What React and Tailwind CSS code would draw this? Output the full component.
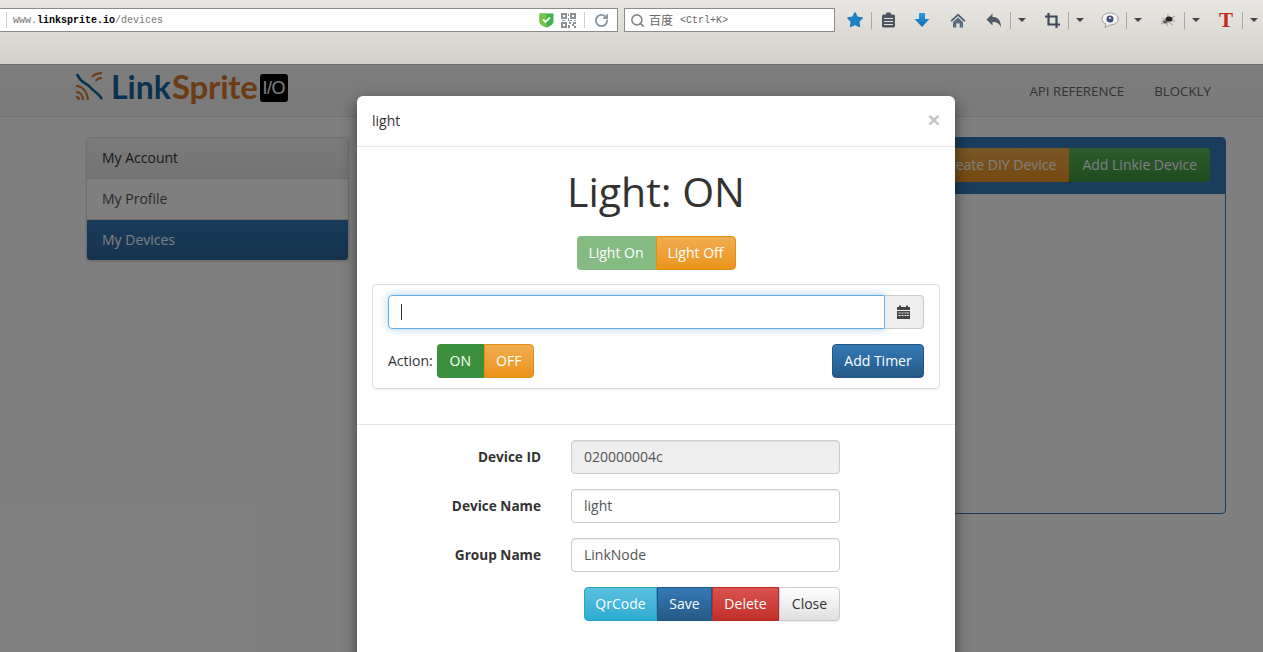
import React from 'react';
import { Search, RotateCw, Star } from 'lucide-react';

const sans = { fontFamily: '"Open Sans", sans-serif' };

const Caret = () => (
    <div className="w-0 h-0 border-x-[4px] border-x-transparent border-t-[4px] border-t-[#444]"></div>
);

const Sep = () => <div className="w-px h-[17px] bg-[#a9a7a2]"></div>;

const DropSlot = ({ children }) => (
    <div className="flex items-center w-[58px]">
        <div className="w-[32px] flex justify-center">{children}</div>
        <Sep />
        <div className="w-[22px] flex justify-center"><Caret /></div>
    </div>
);

const Slot = ({ children, w = 'w-[36px]' }) => (
    <div className={`${w} flex justify-center`}>{children}</div>
);

const QrIcon = () => (
    <svg width="15" height="15" viewBox="0 0 15 15" fill="#8a9094">
        <path d="M0 0h6v6H0zM2 2v2h2V2zM9 0h6v6H9zM11 2v2h2V2zM0 9h6v6H0zM2 11v2h2v-2z" fillRule="evenodd" />
        <path d="M7 1h1v2H7zM7 5h1v3H7zM1 7h3v1H1zM9 7h2v1H9zM13 7h2v1h-2zM8 9h2v2H8zM12 9h3v2h-3zM7 12h2v3H7zM11 11h2v2h-2zM13 13h2v2h-2z" />
    </svg>
);

const ShieldIcon = () => (
    <svg width="15" height="16" viewBox="0 0 15 16">
        <path d="M0.5 1.500h14v8c0 3-4 5-7 6-3-1-7-3-7-6z" fill="#3cb54a" />
        <path d="M0.500 1.500h7v14c-3-1-7-3-7-6z" fill="#74c644" />
        <path d="M4 7.500l2.500 2.500L11 5.500" stroke="#fff" strokeWidth="1.800" fill="none" />
    </svg>
);

const ClipboardIcon = () => (
    <svg width="15" height="16" viewBox="0 0 15 16">
        <rect x="1" y="2.500" width="13" height="13" rx="1.500" fill="#4a5560" />
        <rect x="5" y="0.500" width="5" height="3" rx="1" fill="#4a5560" />
        <path d="M3 6.500h9M3 9.500h9M3 12.500h9" stroke="#e4e2dd" strokeWidth="1.200" />
    </svg>
);

const DownloadIcon = () => (
    <svg width="16" height="16" viewBox="0 0 16 16">
        <defs>
            <linearGradient id="dl" x1="0" y1="0" x2="0" y2="1">
                <stop offset="0" stopColor="#2c9be0" />
                <stop offset="1" stopColor="#0f6db5" />
            </linearGradient>
        </defs>
        <path d="M5 1h6v6h4.500L8 15 0.500 7H5z" fill="url(#dl)" />
    </svg>
);

const HomeIcon = () => (
    <svg width="16" height="15" viewBox="0 0 16 15">
        <path d="M8 0.500L0.500 7.500l1.200 1.200L8 3l6.300 5.700 1.200-1.200z" fill="#4a5f70" />
        <path d="M3 9l5-4.500L13 9v5.500H9.700V10.500H6.300v4H3z" fill="#5a7082" />
    </svg>
);

const UndoIcon = () => (
    <svg width="16" height="15" viewBox="0 0 16 15">
        <path d="M6.500 0.500v3.500c5 0 8.500 2.500 8.500 10.500-1.500-4-4-5.500-8.500-5.500v3.500L0.500 6.500z" fill="#4f5a64" />
    </svg>
);

const CropIcon = () => (
    <svg width="15" height="15" viewBox="0 0 15 15" fill="none" stroke="#3d4a55" strokeWidth="2.200">
        <path d="M3.500 0v11.500H15" />
        <path d="M0 3.500h11.500V15" />
    </svg>
);

const BubbleIcon = () => (
    <svg width="18" height="16" viewBox="0 0 18 16">
        <path d="M9 1c4.500 0 8 2.400 8 6s-3.500 6-8 6l-5 2.500 1-3.500C2.500 11 1 9.300 1 7c0-3.600 3.500-6 8-6z" fill="#f5f5f5" stroke="#9a9a9a" />
        <circle cx="9" cy="7" r="3.500" fill="#3d4f7c" />
        <circle cx="9" cy="6" r="1.300" fill="#d9b9a5" />
    </svg>
);

const SpiderIcon = () => (
    <svg width="16" height="14" viewBox="0 0 16 14">
        <path d="M1 11l14-8M2 5l11 7M8 1l-1 12M1 8h14" stroke="#8a8a85" strokeWidth="0.800" />
        <ellipse cx="9" cy="6" rx="3.500" ry="2.500" fill="#222" />
        <ellipse cx="5" cy="9" rx="2" ry="1.500" fill="#555" />
    </svg>
);

const Chrome = () => (
    <div className="h-[65px] shrink-0 border-b border-[#6d6d6d] bg-linear-to-b from-[#e9e7e3] to-[#d3cfc8] pt-2 flex items-start">
        {/* address bar */}
        <div className="w-[618px] h-[24px] bg-white border-y border-r border-[#8a8a8a] flex items-center shrink-0">
            <div className="w-[7px] h-[16px] border-r border-[#cfcfcf]"></div>
            <div className="pl-[6px] text-[10px] text-[#777] flex-1 whitespace-nowrap" style={{ fontFamily: '"Liberation Mono", monospace' }}>
                www.<span className="text-black font-bold">linksprite.io</span>/devices
            </div>
            <ShieldIcon />
            <div className="w-[7px]"></div>
            <QrIcon />
            <div className="w-px h-[16px] bg-[#cfcfcf] ml-[8px]"></div>
            <div className="w-[32px] flex justify-center">
                <RotateCw size={15} strokeWidth={3} className="text-[#8a98a4]" />
            </div>
        </div>
        {/* search box */}
        <div className="w-[211px] h-[24px] ml-[6px] bg-white border border-[#8a8a8a] flex items-center shrink-0 pl-[5px]">
            <Search size={15} strokeWidth={2.500} className="text-[#888]" />
            <span className="ml-[4px] text-[12px] text-[#666]" style={{ fontFamily: '"Noto Sans CJK SC", sans-serif' }}>百度</span>
            <span className="ml-[7px] text-[10px] text-[#666]" style={{ fontFamily: '"Liberation Mono", monospace' }}>{'<Ctrl+K>'}</span>
        </div>
        {/* toolbar icons */}
        <div className="flex items-center h-[24px] ml-[3px]">
            <div className="w-[33px] flex justify-center">
                <Star size={18} fill="#1a84c9" strokeWidth={1} className="text-[#1a6ea8]" />
            </div>
            <Sep />
            <Slot w="w-[32px]"><ClipboardIcon /></Slot>
            <Slot><DownloadIcon /></Slot>
            <Slot><HomeIcon /></Slot>
            <div className="w-[2px]"></div>
            <DropSlot><UndoIcon /></DropSlot>
            <DropSlot><CropIcon /></DropSlot>
            <DropSlot><BubbleIcon /></DropSlot>
            <DropSlot><SpiderIcon /></DropSlot>
            <DropSlot>
                <span className="text-[#c0281a] text-[21px] leading-none font-bold" style={{ fontFamily: '"Liberation Serif", serif' }}>T</span>
            </DropSlot>
        </div>
    </div>
);

const Logo = () => (
    <div className="flex items-center ml-[76px] h-[32px] mb-[8px]">
        <svg width="27" height="29" viewBox="0 0 27 29" fill="none">
            <path d="M1 2C5 12 11 11 14 15S22 20 26 27" stroke="#0f66a0" strokeWidth="2.600" />
            <path d="M26 1c-4 0-7 1-10 4M26 6c-3 0-5 1-6 3" stroke="#d9782a" strokeWidth="2.200" />
            <path d="M0 14c6 0 11 5 12 14M0 20c4 0 7 3 7 8M0 25c2 0 3 1 3 3" stroke="#d9782a" strokeWidth="2.200" />
        </svg>
        <div className="ml-[8px] leading-none whitespace-nowrap font-bold" style={{ fontFamily: 'Lato, sans-serif' }}>
            <span className="text-[#0f66a0] text-[32px]">Link</span><span className="text-[#d9782a] text-[33px] ml-[1px] tracking-[-0.2px]">Sprite</span>
        </div>
        <div className="ml-[2px] w-[28px] h-[28px] bg-black rounded-[3px] text-white text-[18px] leading-[28px] text-center mt-[2px] tracking-[-0.5px]" style={{ fontFamily: '"Liberation Sans", sans-serif' }}>I/O</div>
    </div>
);

const Background = () => (
    <div className="h-full flex flex-col bg-white text-[14px] text-[#333]" style={sans}>
        <div className="h-[52px] shrink-0 border-b border-[#e4e4e4] bg-linear-to-b from-[#fbfbfb] to-[#f4f4f4] flex items-center justify-between">
            <Logo />
            <div className="flex gap-[30px] mr-[52px] mt-[2px] text-[#666] text-[13.3px]">
                <span>API REFERENCE</span>
                <span>BLOCKLY</span>
            </div>
        </div>
        <div className="flex items-start pt-[20px] pl-[86px] pr-[37px] gap-[23px]">
            <div className="w-[263px] shrink-0 rounded-[4px] border border-[#ddd] shadow-sm overflow-hidden">
                <div className="h-[41px] flex items-center pb-[2px] px-[15px] bg-linear-to-b from-[#f5f5f5] to-[#e8e8e8] border-b border-[#ddd] text-[#333]">My Account</div>
                <div className="h-[41px] flex items-center pb-[2px] px-[15px] bg-white border-b border-[#ddd] text-[#555]">My Profile</div>
                <div className="h-[40px] flex items-center pb-[1px] px-[15px] bg-linear-to-b from-[#337ab7] to-[#2b669a] text-white">My Devices</div>
            </div>
            <div className="flex-1 h-[377px] rounded-[4px] border border-[#337ab7] overflow-hidden bg-white">
                <div className="h-[56px] bg-[#337ab7] flex items-start justify-end pr-[15px] pt-[10px]">
                    <div className="flex text-white">
                        <div className="h-[34px] flex items-center pb-[2px] px-[13px] bg-linear-to-b from-[#f0ad4e] to-[#eb9316] rounded-l-[4px]">Create DIY Device</div>
                        <div className="h-[34px] flex items-center pb-[2px] px-[13px] bg-linear-to-b from-[#5cb85c] to-[#419641] rounded-r-[4px]">Add Linkie Device</div>
                    </div>
                </div>
            </div>
        </div>
    </div>
);

const btn = 'h-[34px] flex items-center justify-center pb-[2px] text-white';
const orange = 'bg-linear-to-b from-[#f0ad4e] to-[#eb9316] border border-[#e38d13]';

const FormRow = ({ label, value, disabled }) => (
    <div className="flex items-center h-[34px]">
        <label className="w-[184px] text-right font-bold text-[13.6px] text-[#333]">{label}</label>
        <div className={`ml-[30px] w-[269px] h-[34px] rounded-[4px] border border-[#ccc] flex items-center pb-[2px] px-[12px] text-[#555] shadow-[inset_0_1px_1px_rgba(0,0,0,0.075)] ${disabled ? 'bg-[#eee]' : 'bg-white'}`}>
            {value}
        </div>
    </div>
);

const CalendarIcon = () => (
    <svg width="13" height="14" viewBox="0 0 13 14" fill="#444">
        <path d="M0 2h2V0.500h2V2h5V0.500h2V2h2v3H0z" />
        <path d="M0 6h13v8H0zM1.500 7.500v1h2v-1zM4.500 7.500v1h2v-1zM7.500 7.500v1h2v-1zM10 7.500v1h2v-1zM1.500 10v1h2v-1zM4.500 10v1h2v-1zM7.500 10v1h2v-1zM10 10v1h2v-1z" fillRule="evenodd" />
    </svg>
);

const Modal = () => (
    <div className="absolute left-[357px] top-[31px] w-[598px] h-[620px] bg-white rounded-t-[6px] shadow-[0_5px_15px_rgba(0,0,0,0.5)] text-[14px] text-[#333]" style={sans}>
        <div className="h-[51px] border-b border-[#e5e5e5] flex items-center justify-between pl-[15px] pr-[15px] pb-[2px]">
            <span>light</span>
            <span className="text-[21px] font-bold leading-none text-[#c4c4c4] pb-[2px]" style={{ fontFamily: '"Liberation Sans", sans-serif' }}>×</span>
        </div>

        <div className="h-[89px] flex items-center justify-center text-[41px] leading-none">Light: ON</div>

        <div className="flex justify-center">
            <div className={`${btn} w-[79px] rounded-l-[4px] bg-[#85bb82]`}>Light On</div>
            <div className={`${btn} w-[80px] rounded-r-[4px] ${orange}`}>Light Off</div>
        </div>

        <div className="mx-[15px] mt-[14px] h-[105px] border border-[#ddd] rounded-[4px] shadow-[0_1px_1px_rgba(0,0,0,0.05)] px-[15px] py-[10px]">
            <div className="flex h-[34px]">
                <div className="flex-1 rounded-l-[4px] border border-[#66afe9] shadow-[0_0_8px_rgba(102,175,233,0.6)] flex items-center pl-[12px]">
                    <div className="w-px h-[16px] bg-[#333]"></div>
                </div>
                <div className="w-[39px] bg-[#eee] border-y border-r border-[#ccc] rounded-r-[4px] flex items-center justify-center pr-[2px]">
                    <CalendarIcon />
                </div>
            </div>
            <div className="flex items-center justify-between mt-[15px] h-[34px]">
                <div className="flex items-center">
                    <span className="mr-[4px] pb-[2px]">Action:</span>
                    <div className={`${btn} w-[47px] rounded-l-[4px] bg-[#3c8f3c]`}>ON</div>
                    <div className={`${btn} w-[50px] rounded-r-[4px] ${orange}`}>OFF</div>
                </div>
                <div className={`${btn} w-[92px] rounded-[4px] bg-linear-to-b from-[#337ab7] to-[#265a88] border border-[#245580]`}>Add Timer</div>
            </div>
        </div>

        <div className="mt-[35px] border-t border-[#e5e5e5] pt-[15px] flex flex-col gap-[15px]">
            <FormRow label="Device ID" value="020000004c" disabled />
            <FormRow label="Device Name" value="light" />
            <FormRow label="Group Name" value="LinkNode" />
            <div className="flex ml-[227px]">
                <div className={`${btn} w-[73px] rounded-l-[4px] bg-linear-to-b from-[#5bc0de] to-[#2aabd2] border border-[#28a4c9]`}>QrCode</div>
                <div className={`${btn} w-[55px] bg-linear-to-b from-[#337ab7] to-[#265a88] border border-[#245580]`}>Save</div>
                <div className={`${btn} w-[67px] bg-linear-to-b from-[#d9534f] to-[#c12e2a] border border-[#b92c28]`}>Delete</div>
                <div className="h-[34px] w-[61px] flex items-center justify-center pb-[2px] rounded-r-[4px] bg-linear-to-b from-white to-[#e0e0e0] border border-[#ccc] text-[#333] shadow-[0_1px_1px_rgba(0,0,0,0.075)]">Close</div>
            </div>
        </div>
    </div>
);

export default function App() {
    return (
        <div className="w-[1263px] h-[652px] overflow-hidden flex flex-col">
            <Chrome />
            <div className="relative flex-1 overflow-hidden">
                <Background />
                <div className="absolute inset-0 bg-black/50"></div>
                <Modal />
            </div>
        </div>
    );
}
